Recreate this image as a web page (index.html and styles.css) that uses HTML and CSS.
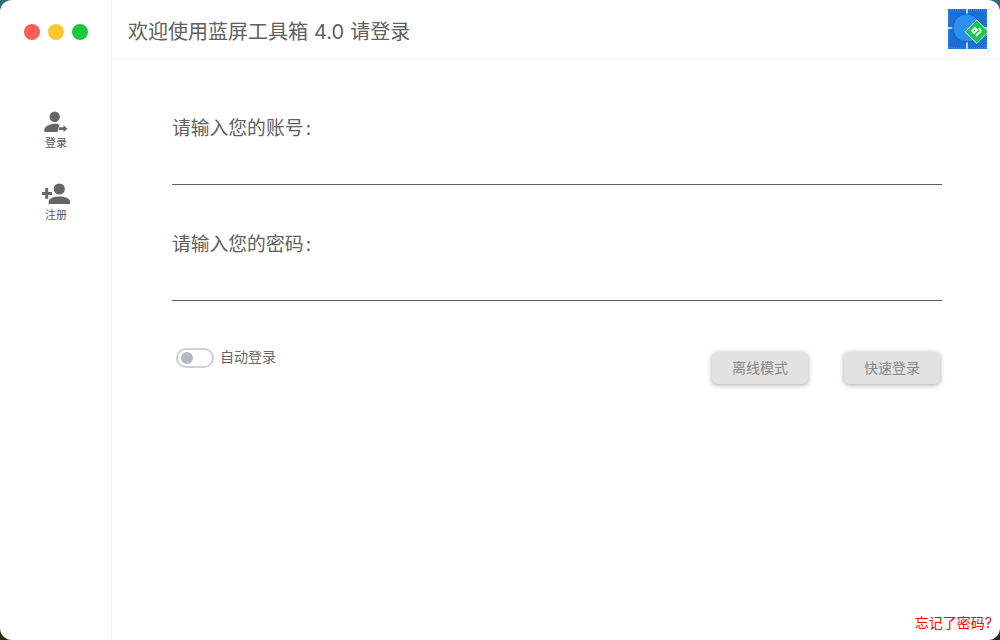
FILE: index.html
```html
<!DOCTYPE html>
<html lang="zh-CN">
<head>
    <meta charset="UTF-8">
    <title>蓝屏工具箱</title>
    <link rel="stylesheet" href="styles.css">
</head>
<body>
    <div class="window">
        <!-- Left Panel -->
        <div class="sidebar">
            <div class="traffic">
                <span class="dot dot-red"></span>
                <span class="dot dot-yellow"></span>
                <span class="dot dot-green"></span>
            </div>
            <a class="nav-item nav-login" href="#">
                <svg width="24" height="22" viewBox="0 0 24 22">
                    <circle cx="10.7" cy="5.7" r="5.2" fill="#666"/>
                    <path d="M0.3 21 V18.5 C1 15 6 12.7 11 12.7 C12.5 12.7 14 13 15.5 13.6 L13.5 21 Z" fill="#666"/>
                    <path d="M15 16.3 H19.5 V14.3 L23.5 17.7 L19.5 21 V19.1 H15 Z" fill="#666"/>
                </svg>
                <span>登录</span>
            </a>
            <a class="nav-item nav-register" href="#">
                <svg width="28" height="22" viewBox="0 0 28 22">
                    <circle cx="17.3" cy="6" r="5.6" fill="#666"/>
                    <path d="M6.7 21 V18.5 C6.7 15.5 12.5 13.6 17.3 13.6 C22 13.6 28 15.5 28 18.5 V21 Z" fill="#666"/>
                    <path d="M3.2 5 H6.2 V8.9 H10 V11.9 H6.2 V15.7 H3.2 V11.9 H0 V8.9 H3.2 Z" fill="#666"/>
                </svg>
                <span>注册</span>
            </a>
        </div>

        <!-- Main Container -->
        <div class="main">
            <div class="titlebar">
                <h1>欢迎使用蓝屏工具箱 4.0 请登录</h1>
                <svg class="logo" width="39" height="40" viewBox="0 0 39 40">
                    <rect width="39" height="40" fill="#1b6ed2"/>
                    <rect x="1" y="1" width="37" height="38" fill="none" stroke="#4f94e2" stroke-width="1" stroke-dasharray="1 1"/>
                    <path d="M19 0 V40 M0 19 H39" stroke="#e4eefa" stroke-width="1.6"/>
                    <circle cx="18.7" cy="19" r="14" fill="#2b90f2" stroke="#1a5fb4" stroke-width="1"/>
                    <rect x="20.5" y="14.5" width="16.5" height="16.5" fill="#17c94b" stroke="#fff" stroke-width="0.8" transform="rotate(45 28.75 22.75)"/>
                    <path d="M24 22 L27 19 L29 21 L26 24 Z M28 27 L33 22 M31 19 L33 22" stroke="#fff" stroke-width="1.8" fill="none"/>
                </svg>
            </div>

            <div class="content">
                <div class="field">
                    <label>请输入您的账号 :</label>
                </div>
                <div class="field">
                    <label>请输入您的密码 :</label>
                </div>

                <div class="actions">
                    <div class="auto-login">
                        <span class="switch"><span class="knob"></span></span>
                        <span class="auto-text">自动登录</span>
                    </div>
                    <div class="buttons">
                        <button>离线模式</button>
                        <button>快速登录</button>
                    </div>
                </div>
            </div>

            <div class="footer">
                <a href="#">忘记了密码?</a>
            </div>
        </div>
    </div>
</body>
</html>
```

FILE: styles.css
```css
/* Basic Styles */
html, body {
    height: 100%;
    margin: 0;
    padding: 0;
}

body {
    font-family: Inter, "Noto Sans CJK SC", sans-serif;
    background: linear-gradient(#2f6a80, #2a2a14);
    overflow: hidden;
}

.window {
    display: flex;
    height: 640px;
    background-color: #fff;
    border-radius: 12px;
    overflow: hidden;
}

/* Sidebar */
.sidebar {
    width: 110px;
    padding-left: 1px;
    border-right: 1px solid #f2f2f2;
    display: flex;
    flex-direction: column;
    align-items: center;
}

.traffic {
    display: flex;
    gap: 8px;
    height: 64px;
    margin-bottom: 47px;
    padding-top: 24px;
    box-sizing: border-box;
}

.dot {
    width: 16px;
    height: 16px;
    border-radius: 50%;
}

.dot-red { background-color: #ff5f57; }
.dot-yellow { background-color: #ffc62e; }
.dot-green { background-color: #1bc93f; }

.nav-item {
    display: flex;
    flex-direction: column;
    align-items: center;
    color: #555;
    font-size: 11px;
    line-height: 14px;
    text-decoration: none;
}

.nav-item svg {
    display: block;
    margin-bottom: 3px;
}

.nav-login {
    margin-bottom: 33px;
}

/* Title bar */
.main {
    flex: 1;
    display: flex;
    flex-direction: column;
}

.titlebar {
    height: 59px;
    border-bottom: 1px solid #f2f2f2;
    display: flex;
    align-items: center;
    justify-content: space-between;
    padding: 0 13px 0 16px;
}

h1 {
    margin: 0;
    padding-top: 2px;
    color: #606060;
    font-size: 20px;
    font-weight: normal;
    word-spacing: 0.5px;
}

.logo {
    margin-top: -1px;
}

/* Form */
.content {
    flex: 1;
    padding: 52px 58px 0 60px;
}

.field {
    height: 72px;
    border-bottom: 1px solid #606060;
    margin-bottom: 43px;
}

.field label {
    display: block;
    padding-top: 2px;
    color: #606060;
    font-size: 18.8px;
    line-height: 30px;
    word-spacing: -3px;
}

.actions {
    display: flex;
    justify-content: space-between;
    margin-top: -3px;
}

.auto-login {
    display: flex;
    align-items: center;
    gap: 6px;
    height: 20px;
    margin: 7px 0 0 4px;
    color: #666;
    font-size: 14px;
}

.auto-text {
    margin-bottom: 4px;
}

.switch {
    display: block;
    width: 28px;
    height: 12px;
    border: 2px solid #cfd0d6;
    border-radius: 10px;
    padding: 2px 3px;
}

.knob {
    display: block;
    width: 12px;
    height: 12px;
    border-radius: 50%;
    background-color: #b3b7c6;
}

.buttons {
    display: flex;
    gap: 36px;
    margin: 11px 2px 0 0;
}

button {
    width: 96px;
    height: 32px;
    padding: 0 0 3px;
    border: none;
    border-radius: 5px;
    background-color: #e2e2e2;
    color: #888;
    font-family: inherit;
    font-size: 14px;
    box-shadow: 0 1px 5px rgba(0, 0, 0, 0.35);
}

/* Footer */
.footer {
    display: flex;
    justify-content: flex-end;
    padding: 0 8px 8px 0;
}

.footer a {
    color: #f00;
    font-size: 14px;
    line-height: 18px;
    text-decoration: none;
}
```
